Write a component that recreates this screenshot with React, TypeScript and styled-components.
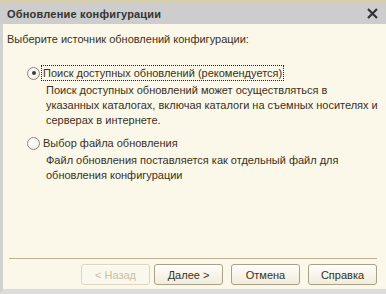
import React, { useState } from "react";
import styled, { createGlobalStyle } from "styled-components";

const GlobalStyle = createGlobalStyle`
  html, body {
    margin: 0;
    padding: 0;
    background: #d6ceb0;
  }
  body {
    font-family: Arial, "Liberation Sans", sans-serif;
  }
`;

const Frame = styled.div`
  width: 386px;
  height: 294px;
  padding-top: 3px;
  box-sizing: border-box;
  display: flex;
  flex-direction: column;
`;

const TitleBar = styled.div`
  height: 21px;
  background: #cdcdcd;
  display: flex;
  align-items: center;
  justify-content: space-between;
  padding: 0 8px 0 7px;
  flex-shrink: 0;
`;

const Title = styled.span`
  font-size: 11px;
  font-weight: bold;
  color: #333333;
  letter-spacing: 0.2px;
`;

const CloseButton = styled.button`
  border: none;
  background: transparent;
  padding: 0;
  width: 11px;
  height: 11px;
  display: flex;
  align-items: center;
  justify-content: center;
  cursor: pointer;
`;

const Body = styled.div`
  flex: 1;
  background: #fbf8ea;
  border-left: 3px solid #d2d2d2;
  border-bottom: 5px solid #dcdcdc;
  display: flex;
  flex-direction: column;
  padding: 8px 9px 0 4px;
`;

const Prompt = styled.div`
  font-size: 11px;
  color: #3a3020;
  line-height: 14px;
`;

const Options = styled.div`
  display: flex;
  flex-direction: column;
  padding: 19px 0 0 20px;
  margin-right: -8px;
  gap: 7px;
`;

const Option = styled.div`
  display: flex;
  flex-direction: column;
`;

const OptionHead = styled.label`
  display: flex;
  align-items: center;
  gap: 1px;
  cursor: pointer;
`;

const RadioDot = styled.span<{ $checked: boolean }>`
  width: 13px;
  height: 13px;
  border-radius: 50%;
  box-sizing: border-box;
  border: 1px solid #8c8a80;
  background: radial-gradient(circle at 40% 35%, #ffffff 0%, #f4f2ea 60%, #e2dfd2 100%);
  display: flex;
  align-items: center;
  justify-content: center;

  &::after {
    content: "";
    width: 4px;
    height: 4px;
    border-radius: 50%;
    background: ${(p) => (p.$checked ? "#3a3a3a" : "transparent")};
  }
`;

const OptionLabel = styled.span<{ $focused: boolean }>`
  font-size: 11px;
  color: #3a3020;
  line-height: 14px;
  padding: 0 1px;
  border: 1px dotted ${(p) => (p.$focused ? "#222" : "transparent")};
`;

const OptionText = styled.p`
  margin: 2px 0 0 19px;
  font-size: 11px;
  line-height: 15px;
  color: #3a3020;
  max-width: 337px;
`;

const Spacer = styled.div`
  flex: 1;
`;

const Divider = styled.div`
  height: 1px;
  background: #bdb395;
  margin-left: 2px;
  margin-bottom: 5px;
`;

const ButtonRow = styled.div`
  display: flex;
  justify-content: flex-end;
  padding-bottom: 4px;
`;

const Button = styled.button<{ $gap?: number }>`
  width: 69px;
  height: 21px;
  margin-left: ${(p) => p.$gap ?? 8}px;
  font-family: Arial, "Liberation Sans", sans-serif;
  font-size: 11px;
  color: #3a3020;
  border: 1px solid #a9a08a;
  border-radius: 3px;
  background: linear-gradient(#fefdf8, #f1ecdc);
  box-shadow: inset 0 1px 0 #ffffff;
  padding: 0;
  cursor: pointer;

  &:disabled {
    color: #c9bfa4;
    border-color: #dcd5c2;
    background: #faf7ec;
    cursor: default;
  }
`;

const App: React.FC = () => {
  const [choice, setChoice] = useState<number>(0);

  const options = [
    {
      label: "Поиск доступных обновлений (рекомендуется)",
      text: "Поиск доступных обновлений может осуществляться в указанных каталогах, включая каталоги на съемных носителях и серверах в интернете.",
    },
    {
      label: "Выбор файла обновления",
      text: "Файл обновления поставляется как отдельный файл для обновления конфигурации",
    },
  ];

  return (
    <>
      <GlobalStyle />
      <Frame>
        <TitleBar>
          <Title>Обновление конфигурации</Title>
          <CloseButton aria-label="Закрыть">
            <svg width="11" height="11" viewBox="0 0 11 11">
              <path d="M1 1 L10 10 M10 1 L1 10" stroke="#333" strokeWidth="2.2" />
            </svg>
          </CloseButton>
        </TitleBar>
        <Body>
          <Prompt>Выберите источник обновлений конфигурации:</Prompt>
          <Options>
            {options.map((o, i) => (
              <Option key={i}>
                <OptionHead onClick={() => setChoice(i)}>
                  <RadioDot $checked={choice === i} />
                  <OptionLabel $focused={choice === i}>{o.label}</OptionLabel>
                </OptionHead>
                <OptionText>{o.text}</OptionText>
              </Option>
            ))}
          </Options>
          <Spacer />
          <Divider />
          <ButtonRow>
            <Button disabled $gap={0}>&lt; Назад</Button>
            <Button $gap={4}>Далее &gt;</Button>
            <Button>Отмена</Button>
            <Button>Справка</Button>
          </ButtonRow>
        </Body>
      </Frame>
    </>
  );
};

export default App;
